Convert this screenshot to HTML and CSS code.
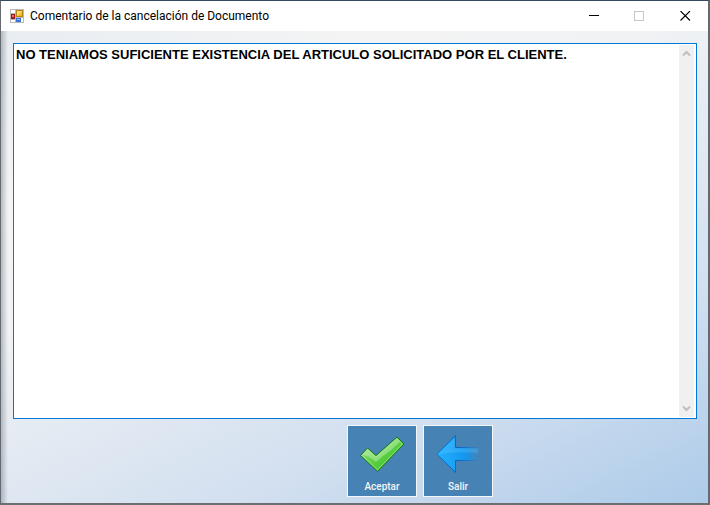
FILE: index.html
```html
<!DOCTYPE html>
<html lang="es">
<head>
  <meta charset="UTF-8">
  <title>Comentario de la cancelación de Documento</title>
  <link rel="stylesheet" href="styles.css">
</head>
<body>

  <div class="window">
    <div class="titlebar">
      <svg class="app-icon" width="14" height="14" viewBox="0 0 14 14" shape-rendering="crispEdges">
        <defs>
          <linearGradient id="yellow" x1="0" y1="0" x2="1" y2="1">
            <stop offset="0" stop-color="#fff3a8"/>
            <stop offset="1" stop-color="#e9a800"/>
          </linearGradient>
        </defs>
        <rect width="14" height="14" fill="#b9b9b9"/>
        <rect x="1" y="1" width="4" height="3" fill="#fff"/>
        <rect x="1" y="11" width="4" height="2" fill="#fff"/>
        <rect x="11" y="9" width="2" height="4" fill="#fff"/>
        <rect x="1" y="5" width="4" height="5" fill="#a31515"/>
        <rect x="2" y="6" width="2" height="2" fill="#e8766c"/>
        <rect x="6" y="1" width="7" height="7" fill="#b98512"/>
        <rect x="7" y="2" width="5" height="5" fill="url(#yellow)"/>
        <rect x="6" y="9" width="5" height="4" fill="#3a76d6"/>
        <rect x="7" y="10" width="3" height="1" fill="#8fbcf7"/>
      </svg>
      <h1 class="title">Comentario de la cancelación de Documento</h1>
      <div class="controls">
        <button class="control" type="button" aria-label="Minimizar">
          <svg width="11" height="11" viewBox="0 0 11 11"><path d="M1 4.5H11" stroke="#000"/></svg>
        </button>
        <button class="control" type="button" aria-label="Maximizar" disabled>
          <svg width="11" height="11" viewBox="0 0 11 11"><rect x="0.5" y="0.5" width="9" height="9" fill="none" stroke="#c8c8c8"/></svg>
        </button>
        <button class="control" type="button" aria-label="Cerrar">
          <svg width="11" height="11" viewBox="0 0 11 11"><path d="M0.5 0L10 9.5M10 0L0.5 9.5" stroke="#000" stroke-width="1.1"/></svg>
        </button>
      </div>
    </div>

    <form class="content">
      <div class="comment-box">
        <textarea class="comment" aria-label="Comentario">NO TENIAMOS SUFICIENTE EXISTENCIA DEL ARTICULO SOLICITADO POR EL CLIENTE.</textarea>
        <div class="scrollbar">
          <svg width="9" height="7" viewBox="0 0 9 7"><path d="M1 5.5L4.5 2L8 5.5" fill="none" stroke="#bfbfbf" stroke-width="2"/></svg>
          <svg width="9" height="7" viewBox="0 0 9 7"><path d="M1 1.5L4.5 5L8 1.5" fill="none" stroke="#bfbfbf" stroke-width="2"/></svg>
        </div>
      </div>

      <div class="actions">
        <button class="action" type="button">
          <svg width="46" height="40" viewBox="0 0 46 40">
            <defs>
              <linearGradient id="green" x1="0" y1="0" x2="1" y2="1">
                <stop offset="0" stop-color="#a5e39a"/>
                <stop offset="0.5" stop-color="#5fd044"/>
                <stop offset="1" stop-color="#24b51c"/>
              </linearGradient>
            </defs>
            <path d="M1.5 21.5L8.5 14L17 21.5L38 3L45 10L18.5 37.5Z" fill="url(#green)" stroke="#1b7526" stroke-width="1" stroke-linejoin="round"/>
            <path d="M3.2 21.4L8.6 15.5L17 23L38 4.6L43.3 10L18.5 35.8Z" fill="none" stroke="#b4f0a0" stroke-width="0.8" opacity="0.8"/>
            <path d="M3.5 21L8.6 15.5L17 23L38 4.6L41 8L31 17Q23 22 17 28Q10 21 3.5 21Z" fill="#d9f5d2" opacity="0.4"/>
          </svg>
          <span>Aceptar</span>
        </button>
        <button class="action" type="button">
          <svg width="46" height="40" viewBox="0 0 46 40">
            <defs>
              <linearGradient id="blue" gradientUnits="userSpaceOnUse" x1="2" y1="0" x2="45" y2="0">
                <stop offset="0" stop-color="#25b2ff"/>
                <stop offset="0.65" stop-color="#1496ee"/>
                <stop offset="1" stop-color="#1c93e6" stop-opacity="0"/>
              </linearGradient>
              <linearGradient id="edge" gradientUnits="userSpaceOnUse" x1="2" y1="0" x2="45" y2="0">
                <stop offset="0" stop-color="#0b78d6"/>
                <stop offset="0.5" stop-color="#0b63c2"/>
                <stop offset="1" stop-color="#1470c8" stop-opacity="0"/>
              </linearGradient>
            </defs>
            <path d="M2 20L20.5 1.5V13.5H45V26.5H20.5V38.5Z" fill="url(#blue)" stroke="url(#edge)" stroke-width="1"/>
            <path d="M4 20L19.5 4V14.5H43V19Q22 17 4 20Z" fill="#6bd0ff" opacity="0.25"/>
          </svg>
          <span>Salir</span>
        </button>
      </div>
    </form>
  </div>

</body>
</html>
```

FILE: styles.css
```css
* {
  box-sizing: border-box;
}

body {
  margin: 0;
  background: #b5b3b0;
  font-family: "Liberation Sans", Arial, sans-serif;
}

.window {
  display: flex;
  flex-direction: column;
  height: 100vh;
  border: 1px solid #666a70;
  border-top-color: #34495e;
  border-right-width: 2px;
  border-bottom: 2px solid #6b6d70;
}

.titlebar {
  display: flex;
  align-items: center;
  height: 30px;
  padding-left: 9px;
  background: #fff;
}

.title {
  flex: 1;
  margin: 0 0 0 6px;
  font-family: Roboto, "Segoe UI", sans-serif;
  font-size: 12px;
  font-weight: normal;
  line-height: 16px;
  color: #000;
}

.controls {
  display: flex;
  height: 100%;
}

.control {
  display: flex;
  align-items: center;
  justify-content: center;
  width: 46px;
  padding: 0;
  border: none;
  background: none;
}

.content {
  flex: 1;
  display: flex;
  flex-direction: column;
  gap: 6px;
  padding: 12px 11px 6px 12px;
  background:
    linear-gradient(to right, rgba(110, 120, 130, 0.45), rgba(160, 170, 180, 0) 7px),
    linear-gradient(155deg, #e8edf2 0%, #f4f4f4 22%, #f0f2f4 38%, #d3e0f0 72%, #adcbe9 100%);
}

.comment-box {
  flex: 1;
  display: flex;
  padding: 1px 2px 1px 1px;
  border: 1px solid #0078d7;
  background: #fff;
}

.comment {
  flex: 1;
  padding: 2px 1px;
  border: none;
  outline: none;
  resize: none;
  overflow: hidden;
  background: #fff;
  color: #000;
  font-family: "Liberation Sans", Arial, sans-serif;
  font-size: 13px;
  font-weight: bold;
  line-height: 16px;
}

.scrollbar {
  display: flex;
  flex-direction: column;
  align-items: center;
  justify-content: space-between;
  width: 15px;
  padding: 5px 0;
  background: #f0f0f0;
}

.actions {
  display: flex;
  justify-content: center;
  gap: 6px;
  padding-left: 130px;
}

.action {
  display: flex;
  flex-direction: column;
  align-items: center;
  justify-content: flex-end;
  width: 70px;
  height: 72px;
  padding: 0 0 3px;
  border: 1px solid #f4f6f8;
  background: #4682b4;
  color: #f5f5f5;
  font-family: Roboto, "Liberation Sans", sans-serif;
  font-size: 10px;
  font-weight: 500;
  line-height: 12px;
}

.action svg {
  margin-bottom: 7px;
}
```
